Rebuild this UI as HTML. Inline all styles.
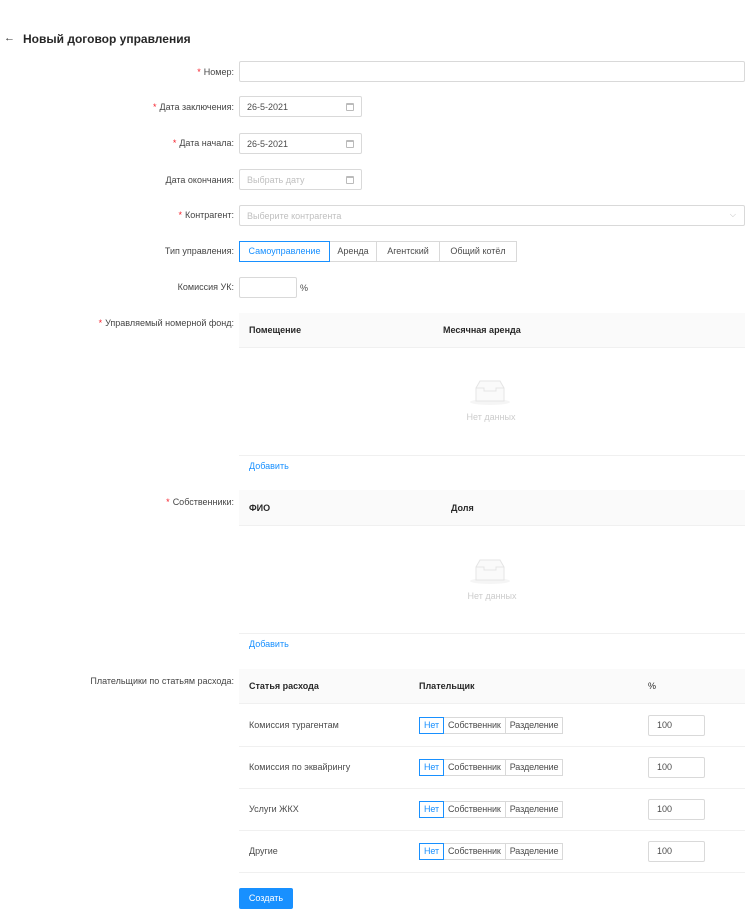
<!DOCTYPE html>
<html><head><meta charset="utf-8"><style>
*{box-sizing:border-box;margin:0;padding:0}
body{width:751px;height:917px;background:#fff;font-family:"Liberation Sans",sans-serif;font-size:9px;color:rgba(0,0,0,.72);position:relative;overflow:hidden}
.a{position:absolute}
.lbl{position:absolute;right:517px;text-align:right;white-space:nowrap;line-height:12px;color:rgba(0,0,0,.75)}
.lbl b{color:#f5222d;font-weight:normal;margin-right:3px}
.inp{position:absolute;border:1px solid #d9d9d9;border-radius:2px;background:#fff;padding-left:7px;display:flex;align-items:center}
.ph{color:#bfbfbf}
.cal{position:absolute;right:7px;top:50%;margin-top:-4px;width:8px;height:8px;border:1px solid #bbb;border-top-width:2px;border-radius:1px}
.th{position:absolute;background:#fafafa;border-bottom:1px solid #f0f0f0;left:239px;width:506px}
.th span{position:absolute;font-weight:bold;color:rgba(0,0,0,.85);top:50%;margin-top:-6px;line-height:12px}
.line{position:absolute;left:239px;width:506px;height:1px;background:#f0f0f0}
.link{position:absolute;left:249px;color:#1890ff}
.empty{position:absolute;left:470px;width:40px;height:26px}
.nd{position:absolute;color:#ccc;width:100px;text-align:center}
.seg{position:absolute;left:419px;height:17px;display:flex}
.seg div{border:1px solid #d9d9d9;line-height:15px;padding:0 4px;background:#fff;letter-spacing:-0.1px}
.seg div+div{border-left:none}
.seg .on{border-color:#1890ff;color:#1890ff}
.pin{position:absolute;left:648px;width:57px;height:21px;border:1px solid #d9d9d9;border-radius:2px;padding-left:8px;line-height:19px}
</style></head><body>
<div class="a" style="left:4px;top:32px;font-size:11px;color:#333">←</div>
<div class="a" style="left:23px;top:32px;font-size:12px;font-weight:bold;color:rgba(0,0,0,.85)">Новый договор управления</div>

<div class="lbl" style="top:66px"><b>*</b>Номер:</div>
<div class="inp" style="left:239px;top:61px;width:506px;height:21px"></div>

<div class="lbl" style="top:101px"><b>*</b>Дата заключения:</div>
<div class="inp" style="left:239px;top:96px;width:123px;height:21px">26-5-2021<i class="cal"></i></div>

<div class="lbl" style="top:137px"><b>*</b>Дата начала:</div>
<div class="inp" style="left:239px;top:133px;width:123px;height:21px">26-5-2021<i class="cal"></i></div>

<div class="lbl" style="top:174px">Дата окончания:</div>
<div class="inp ph" style="left:239px;top:169px;width:123px;height:21px">Выбрать дату<i class="cal"></i></div>

<div class="lbl" style="top:209px"><b>*</b>Контрагент:</div>
<div class="inp ph" style="left:239px;top:205px;width:506px;height:21px">Выберите контрагента<span class="a" style="right:8px;top:4px;color:#bbb;font-size:8px">⌵</span></div>

<div class="lbl" style="top:245px">Тип управления:</div>
<div class="a" style="left:239px;top:241px;height:21px;display:flex">
<div style="border:1px solid #1890ff;color:#1890ff;width:91px;text-align:center;line-height:19px">Самоуправление</div>
<div style="border:1px solid #d9d9d9;border-left:none;width:47px;text-align:center;line-height:19px">Аренда</div>
<div style="border:1px solid #d9d9d9;border-left:none;width:63px;text-align:center;line-height:19px">Агентский</div>
<div style="border:1px solid #d9d9d9;border-left:none;width:77px;text-align:center;line-height:19px">Общий котёл</div>
</div>

<div class="lbl" style="top:281px">Комиссия УК:</div>
<div class="inp" style="left:239px;top:277px;width:58px;height:21px"></div>
<div class="a" style="left:300px;top:283px">%</div>

<div class="lbl" style="top:317px"><b>*</b>Управляемый номерной фонд:</div>
<div class="th" style="top:313px;height:35px"><span style="left:10px">Помещение</span><span style="left:204px">Месячная аренда</span></div>
<svg class="empty" style="top:380px" viewBox="0 0 40 26"><ellipse cx="20" cy="22" rx="20" ry="3" fill="#f5f5f5"/><path d="M6 8 L10 1 H30 L34 8 V21 H6Z" fill="#fafafa" stroke="#e5e5e5"/><path d="M6 8 H14 V11 H26 V8 H34" fill="none" stroke="#e5e5e5"/></svg>
<div class="nd" style="left:441px;top:412px">Нет данных</div>
<div class="line" style="top:455px"></div>
<div class="link" style="top:461px">Добавить</div>

<div class="lbl" style="top:496px"><b>*</b>Собственники:</div>
<div class="th" style="top:490px;height:36px"><span style="left:10px">ФИО</span><span style="left:212px">Доля</span></div>
<svg class="empty" style="top:559px" viewBox="0 0 40 26"><ellipse cx="20" cy="22" rx="20" ry="3" fill="#f5f5f5"/><path d="M6 8 L10 1 H30 L34 8 V21 H6Z" fill="#fafafa" stroke="#e5e5e5"/><path d="M6 8 H14 V11 H26 V8 H34" fill="none" stroke="#e5e5e5"/></svg>
<div class="nd" style="left:442px;top:591px">Нет данных</div>
<div class="line" style="top:633px"></div>
<div class="link" style="top:639px">Добавить</div>

<div class="lbl" style="top:675px">Плательщики по статьям расхода:</div>
<div class="th" style="top:669px;height:35px"><span style="left:10px">Статья расхода</span><span style="left:180px">Плательщик</span><span style="left:409px;font-weight:normal">%</span></div>

<div class="a" style="left:249px;top:720px">Комиссия турагентам</div>
<div class="seg" style="top:717px"><div class="on">Нет</div><div>Собственник</div><div>Разделение</div></div>
<div class="pin" style="top:715px">100</div>
<div class="line" style="top:746px"></div>

<div class="a" style="left:249px;top:762px">Комиссия по эквайрингу</div>
<div class="seg" style="top:759px"><div class="on">Нет</div><div>Собственник</div><div>Разделение</div></div>
<div class="pin" style="top:757px">100</div>
<div class="line" style="top:788px"></div>

<div class="a" style="left:249px;top:804px">Услуги ЖКХ</div>
<div class="seg" style="top:801px"><div class="on">Нет</div><div>Собственник</div><div>Разделение</div></div>
<div class="pin" style="top:799px">100</div>
<div class="line" style="top:830px"></div>

<div class="a" style="left:249px;top:846px">Другие</div>
<div class="seg" style="top:843px"><div class="on">Нет</div><div>Собственник</div><div>Разделение</div></div>
<div class="pin" style="top:841px">100</div>
<div class="line" style="top:872px"></div>

<div class="a" style="left:239px;top:888px;width:54px;height:21px;background:#1890ff;color:#fff;border-radius:2px;text-align:center;line-height:21px">Создать</div>
</body></html>
